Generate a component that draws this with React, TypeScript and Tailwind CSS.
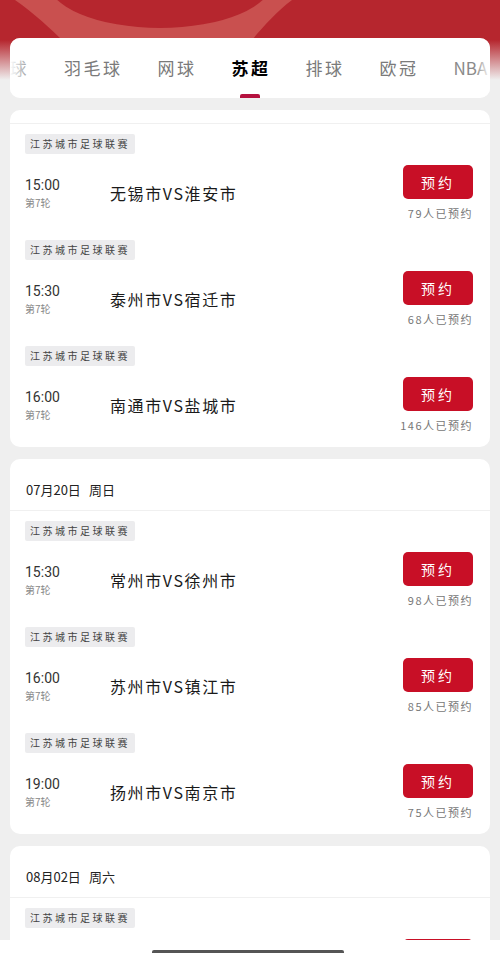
import React from 'react';

const FONT = { fontFamily: '"Noto Sans CJK SC", "Noto Sans", sans-serif' };
const NUM = { fontFamily: 'Roboto, "Noto Sans CJK SC", sans-serif' };

type Match = { time: string; title: string; count: number };

const tabs = ['足球', '羽毛球', '网球', '苏超', '排球', '欧冠', 'NBA'];

const days: { date: string | null; matches: Match[] }[] = [
  {
    date: null,
    matches: [
      { time: '15:00', title: '无锡市VS淮安市', count: 79 },
      { time: '15:30', title: '泰州市VS宿迁市', count: 68 },
      { time: '16:00', title: '南通市VS盐城市', count: 146 },
    ],
  },
  {
    date: '07月20日 周日',
    matches: [
      { time: '15:30', title: '常州市VS徐州市', count: 98 },
      { time: '16:00', title: '苏州市VS镇江市', count: 85 },
      { time: '19:00', title: '扬州市VS南京市', count: 75 },
    ],
  },
  {
    date: '08月02日 周六',
    matches: [{ time: '15:00', title: '宿迁市VS无锡市', count: 52 }],
  },
];

const MatchRow: React.FC<{ m: Match }> = ({ m }) => (
  <div className="pt-[10px] pb-[10px]">
    <div className="flex h-[20px] w-fit items-center rounded-[2px] bg-[#ececee] px-[5px] text-[10px] leading-[20px] tracking-[2.5px] text-[#444]">
      江苏城市足球联赛
    </div>
    <div className="mt-[11px] flex items-start justify-between">
      <div className="flex items-center pt-[12px]">
        <div className="w-[85px]">
          <div className="text-[14px] leading-[16px] text-[#333]" style={NUM}>{m.time}</div>
          <div className="mt-[3px] text-[10px] leading-[13px] text-[#888]">第7轮</div>
        </div>
        <div className="text-[16px] leading-[20px] tracking-[1.6px] text-[#1a1a1a]">{m.title}</div>
      </div>
      <div className="flex flex-col items-end">
        <div className="flex h-[34px] w-[70px] items-center justify-center rounded-[5px] bg-[#c80f26] text-[14px] leading-[20px] tracking-[3px] text-white">
          预约
        </div>
        <div className="mt-[7px] text-[11px] leading-[14px] tracking-[1.5px] text-[#777]">{m.count}人已预约</div>
      </div>
    </div>
  </div>
);

export default function App() {
  return (
    <div className="relative h-[953px] w-[500px] overflow-hidden bg-[#efefef]" style={FONT}>
      <div className="relative bg-[linear-gradient(to_bottom,#b6262e_0px,#b6262e_40px,#efefef_80px)] pt-[38px]">
        <svg className="absolute left-0 top-0" width="500" height="40" viewBox="0 0 500 40">
          <path d="M15,0 C35,14 52,30 62,40 L252,40 C262,28 276,12 292,0 Z" fill="#c9504f" />
          <ellipse cx="160" cy="-20" rx="113" ry="48" fill="#b6262e" />
        </svg>
        <div className="relative mx-[10px] h-[60px] overflow-hidden rounded-[10px] bg-white">
          <div className="ml-[-20px] flex h-full items-center gap-[35px] whitespace-nowrap text-[17px] tracking-[2.5px]">
            {tabs.map(t => (
              <div
                key={t}
                className={t === '苏超' ? 'font-bold text-black' : t === 'NBA' ? 'tracking-normal text-[#8a8a8a]' : 'text-[#7a7a7a]'}
              >
                {t}
              </div>
            ))}
          </div>
          <div className="absolute bottom-0 left-[230px] h-[4px] w-[20px] rounded-t-[2px] bg-[#b5123f]" />
          <div className="absolute left-0 top-0 h-full w-[24px] bg-gradient-to-r from-white to-transparent" />
          <div className="absolute right-0 top-0 h-full w-[14px] bg-gradient-to-l from-white to-transparent" />
        </div>
      </div>

      <div className="mt-[12px] flex flex-col gap-[12px] px-[10px]">
        {days.map((d, i) => (
          <div key={i} className="rounded-[10px] bg-white pb-[5px]">
            {d.date ? (
              <div className="flex h-[52px] items-start border-b border-[#f0f0f0] px-[16px] pt-[22px] text-[13px] leading-[18px] text-[#222]">
                <span>{d.date.split(' ')[0]}</span>
                <span className="ml-[8px]">{d.date.split(' ')[1]}</span>
              </div>
            ) : (
              <div className="h-[14px] border-b border-[#f0f0f0]" />
            )}
            <div className="pl-[15px] pr-[17px]">
              {d.matches.map((m, j) => (
                <MatchRow key={j} m={m} />
              ))}
            </div>
          </div>
        ))}
      </div>

      <div className="absolute bottom-0 left-0 h-[13px] w-full bg-white">
        <div className="absolute bottom-0 left-[152px] h-[3px] w-[192px] rounded-t-[2px] bg-[#555]" />
      </div>
    </div>
  );
}
